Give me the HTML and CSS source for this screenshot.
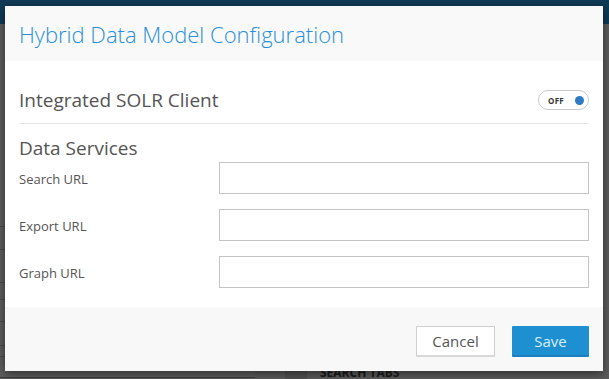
FILE: index.html
```html
<!DOCTYPE html>
<html>
<head>
<meta charset="utf-8">
<link rel="stylesheet" href="styles.css">
</head>
<body>
<div class="page">
  <div class="topbar"></div>
  <div class="backdrop">
    <div class="side">
      <div class="side-row r1"></div>
      <div class="side-row r2"></div>
      <div class="side-row r3"></div>
      <div class="side-row r4"></div>
      <div class="side-row r5"></div>
      <div class="side-row r6"></div>
      <div class="side-row r7"></div>
    </div>
    <div class="bottom-strip">
      <div class="bs-left"></div>
      <div class="bs-tab"></div>
      <div class="bs-text">SEARCH TABS</div>
    </div>
  </div>
</div>

<div class="modal">
  <div class="modal-header">
    <h1 class="modal-title">Hybrid Data Model Configuration</h1>
  </div>
  <div class="modal-body">
    <div class="toggle-row">
      <span class="section-title">Integrated SOLR Client</span>
      <span class="toggle"><span class="toggle-label">OFF</span><span class="toggle-dot"></span></span>
    </div>
    <div class="section-title ds">Data Services</div>
    <div class="form-row"><label class="form-label">Search URL</label><input class="form-input" type="text"></div>
    <div class="form-row"><label class="form-label">Export URL</label><input class="form-input" type="text"></div>
    <div class="form-row"><label class="form-label">Graph URL</label><input class="form-input" type="text"></div>
  </div>
  <div class="modal-footer">
    <button class="btn btn-cancel">Cancel</button>
    <button class="btn btn-save">Save</button>
  </div>
</div>
</body>
</html>
```

FILE: styles.css
```css
html, body {
  margin: 0;
  padding: 0;
  width: 609px;
  height: 379px;
  overflow: hidden;
  font-family: "Open Sans", "Liberation Sans", sans-serif;
}
.page {
  width: 609px;
  height: 379px;
  display: flex;
  flex-direction: column;
  background: #5b5b5b;
}
.topbar {
  height: 24px;
  background: #0f3a56;
}
.backdrop {
  flex: 1;
  display: flex;
  flex-direction: column;
  justify-content: space-between;
  background: #5d5d5d;
}
.side {
  margin-top: 180px;
  width: 10px;
  display: flex;
  flex-direction: column;
}
.side-row {
  border-bottom: 1px solid #4a4a4a;
}
.r1 { height: 22px; }
.r2 { height: 22px; }
.r3 { height: 32px; }
.r4 { height: 16px; }
.r5 { height: 21px; }
.r6 { height: 23px; }
.r7 { height: 10px; }
.bottom-strip {
  height: 14px;
  display: flex;
  align-items: flex-end;
}
.bs-left {
  width: 255px;
  height: 12px;
  background: #606060;
  border-bottom: 1px solid #3f3f3f;
  align-self: flex-start;
}
.bs-tab {
  width: 22px;
  height: 14px;
  margin-left: 30px;
  background: #535353;
}
.bs-text {
  margin-left: 13px;
  font-weight: 700;
  font-size: 12px;
  color: #1a1a1a;
  line-height: 13px;
  align-self: flex-end;
}
.modal {
  position: absolute;
  left: 5px;
  top: 6px;
  width: 598px;
  height: 365px;
  background: #fff;
  box-shadow: 0 3px 9px rgba(0,0,0,0.5);
  display: flex;
  flex-direction: column;
}
.modal-header {
  height: 55px;
  background: #f9f9f9;
  display: flex;
  align-items: center;
  padding: 0 14px;
}
.modal-title {
  margin: 0;
  font-weight: 300;
  font-size: 22px;
  color: #2a8fd6;
}
.modal-body {
  flex: 1;
  padding: 0 14px;
  display: flex;
  flex-direction: column;
}
.toggle-row {
  height: 63px;
  display: flex;
  align-items: center;
  justify-content: space-between;
  border-bottom: 1px solid #e6e6e6;
  box-sizing: border-box;
  padding-top: 16px;
}
.section-title {
  font-size: 19px;
  color: #555;
}
.ds {
  margin-top: 11px;
  line-height: 26px;
}
.toggle {
  height: 18px;
  border: 1px solid #c8c8c8;
  border-radius: 10px;
  display: flex;
  align-items: center;
  justify-content: space-between;
  padding: 0 4px 0 9px;
  box-sizing: content-box;
  width: 36px;
}
.toggle-label {
  font-size: 8px;
  font-weight: 700;
  color: #333;
  letter-spacing: 0.3px;
}
.toggle-dot {
  width: 9px;
  height: 9px;
  border-radius: 50%;
  background: #2f7ac4;
}
.form-row {
  display: flex;
  align-items: center;
  justify-content: space-between;
  height: 33px;
  margin-bottom: 14px;
}
.form-label {
  font-size: 13px;
  color: #555;
  padding-top: 3px;
}
.form-input {
  width: 370px;
  height: 32px;
  box-sizing: border-box;
  border: 1px solid #c4c4c4;
  margin: 0;
  padding: 0 6px;
  background: #fff;
}
.modal-footer {
  height: 64px;
  background: #f8f8f8;
  display: flex;
  align-items: center;
  justify-content: flex-end;
  padding: 5px 14px 0;
  box-sizing: border-box;
  gap: 17px;
}
.btn {
  height: 31px;
  font-family: "Open Sans", "Liberation Sans", sans-serif;
  font-size: 15px;
  font-weight: 400;
  border-radius: 1px;
  padding: 0;
  cursor: pointer;
}
.btn-cancel {
  width: 79px;
  background: #fff;
  border: 1px solid #cfcfcf;
  border-bottom: 2px solid #d8d8d8;
  color: #555;
}
.btn-save {
  width: 77px;
  background: #1e8fd1;
  border: none;
  border-bottom: 2px solid #1a7fbf;
  color: #d8eefb;
}
```
